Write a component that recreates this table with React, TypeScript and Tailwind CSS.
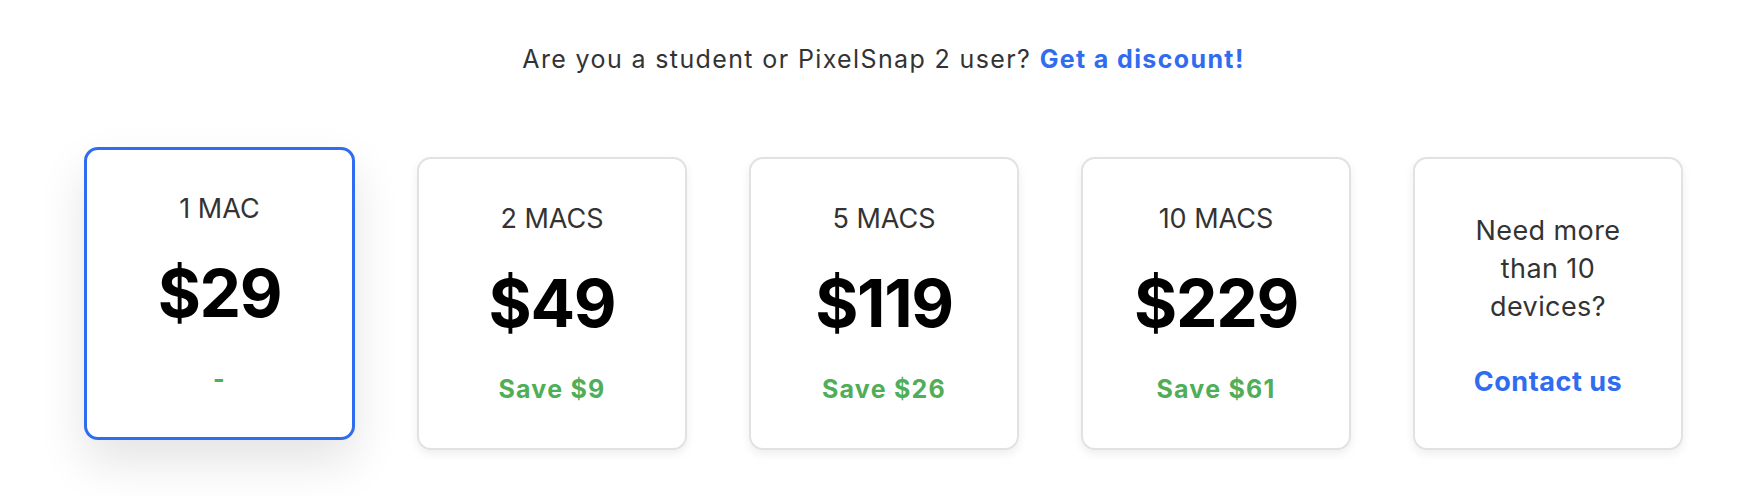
import React from "react";

type Plan = {
    label: string;
    price: string;
    note: string;
    selected?: boolean;
};

const plans: Plan[] = [
    { label: "1 MAC", price: "$29", note: "-", selected: true },
    { label: "2 MACS", price: "$49", note: "Save $9" },
    { label: "5 MACS", price: "$119", note: "Save $26" },
    { label: "10 MACS", price: "$229", note: "Save $61" },
];

const PlanCard = ({ label, price, note, selected }: Plan) => {
    return (
        <div
            className={
                selected
                    ? "w-[271px] h-[293px] rounded-[14px] bg-white border-[3px] border-[#306cf0] shadow-[0_22px_48px_rgba(0,0,0,0.11)] -translate-y-[10px] flex flex-col items-center justify-center"
                    : "w-[270px] h-[293px] rounded-[14px] bg-white border-2 border-[#e2e2e2] shadow-[0_4px_10px_rgba(0,0,0,0.07)] flex flex-col items-center justify-center"
            }
        >
            <span className="text-[27px] leading-none text-[#333333]">{label}</span>
            <span className="mt-[38px] text-[66px] leading-none font-bold tracking-[-0.02em] text-black">
                {price}
            </span>
            <span className="mt-[41px] text-[25px] leading-none font-bold tracking-[0.05em] text-[#4fae57]">
                {note}
            </span>
        </div>
    );
};

const ContactCard = () => {
    return (
        <div className="w-[270px] h-[293px] rounded-[14px] bg-white border-2 border-[#e2e2e2] shadow-[0_4px_10px_rgba(0,0,0,0.07)] flex flex-col items-center justify-center">
            <p className="max-w-[170px] text-center text-[27px] leading-[38px] tracking-[0.015em] text-[#333333]">
                Need more than 10 devices?
            </p>
            <a
                href="#"
                className="mt-[42px] text-[27px] leading-none font-bold tracking-[0.02em] text-[#306cf0]"
            >
                Contact us
            </a>
        </div>
    );
};

export default function App() {
    return (
        <div
            className="w-[1752px] h-[496px] bg-white pl-[84px] pr-[69px] pt-[47px] overflow-hidden"
            style={{ fontFamily: "Inter, 'Noto Sans', sans-serif" }}
        >
            <p className="text-center text-[25px] leading-none tracking-[0.055em] text-[#333333]">
                Are you a student or PixelSnap 2 user?{" "}
                <a href="#" className="font-bold text-[#306cf0]">
                    Get a discount!
                </a>
            </p>

            <div className="mt-[85px] flex items-start justify-between">
                {plans.map((plan) => (
                    <PlanCard key={plan.label} {...plan} />
                ))}
                <ContactCard />
            </div>
        </div>
    );
}
